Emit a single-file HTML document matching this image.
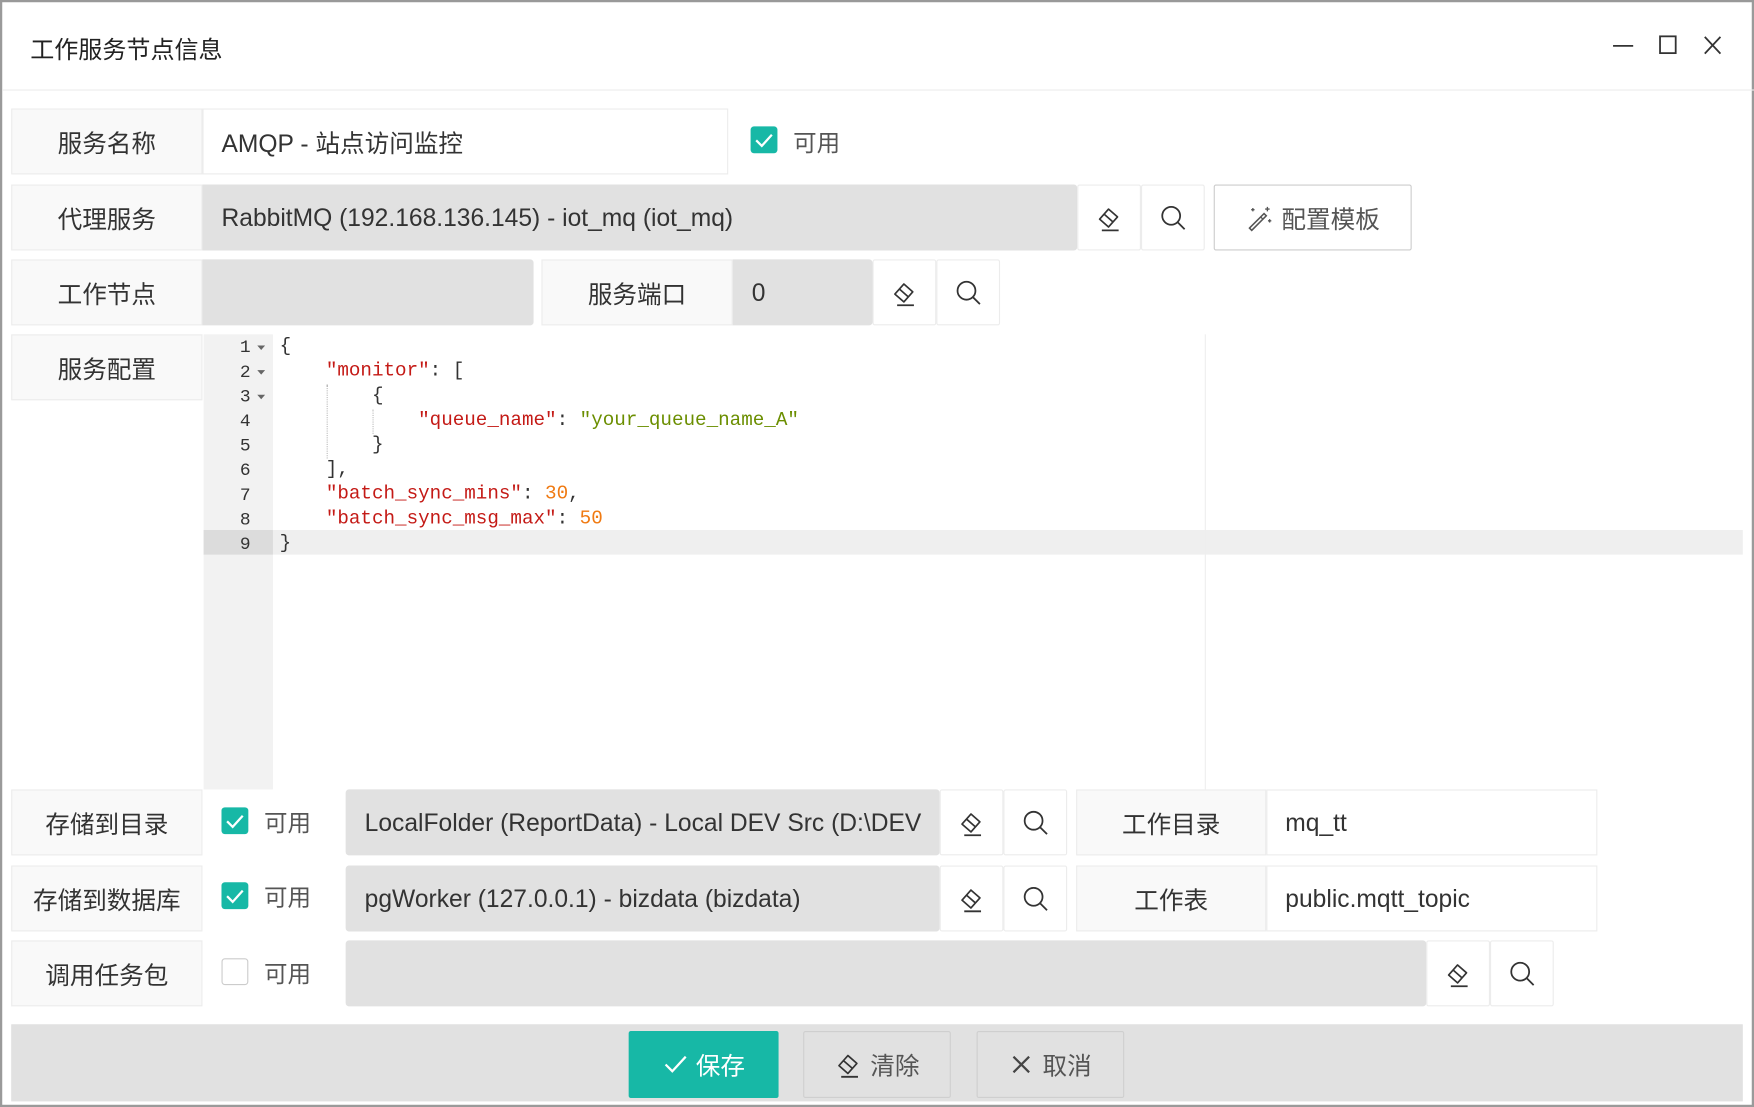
<!DOCTYPE html>
<html><head><meta charset="utf-8"><style>
*{box-sizing:border-box;margin:0;padding:0}
html,body{width:1754px;height:1107px;overflow:hidden;background:#fff}
#w{position:absolute;left:0;top:0;width:1568px;height:990px;transform:scale(1.118622,1.118182);transform-origin:0 0;font-family:"Liberation Sans","Noto Sans CJK SC",sans-serif;color:#333;border:2px solid #9a9a9a;border-top:2px solid #999;background:#fff}
.a{position:absolute}
.lab{position:absolute;background:#f9f9f9;border:1px solid #ececec;font-size:22px;color:#333;text-align:center;display:flex;align-items:center;justify-content:center}
.inp{position:absolute;border:1px solid #ececec;font-size:22px;color:#333;display:flex;align-items:center;padding-left:16px;white-space:nowrap;overflow:hidden}
.g{background:#e1e1e1;border-color:#e1e1e1;border-radius:0 3px 3px 0}
.btn{position:absolute;border:1px solid #ececec;background:#fff;display:flex;align-items:center;justify-content:center;border-radius:2px}
.cb{position:absolute;width:24px;height:24px;border-radius:3px;background:#17b8a6}
.cbu{background:#fff;border:1px solid #ccc}
.ky{font-size:21px;color:#555;position:absolute}
.code{position:absolute;font-family:"Liberation Mono",monospace;font-size:17.2px;line-height:22px;white-space:pre;color:#333}
.k{color:#c41a16}.s{color:#6b8e00}.n{color:#f07a12}
.gl{position:absolute;font-family:"Liberation Mono",monospace;font-size:16px;line-height:22px;color:#333;text-align:right;width:44px;left:182px}
</style></head><body><div id="w">
<div class="a" style="left:25px;top:26px;font-size:21.5px;color:#222">工作服务节点信息</div>
<svg class="a" style="left:1436px;top:26px" width="110" height="26"><path d="M4 13h18" stroke="#333" stroke-width="1.6"/><rect x="46" y="4.5" width="14" height="15" fill="none" stroke="#333" stroke-width="1.6"/><path d="M86 5l14 15M100 5l-14 15" stroke="#333" stroke-width="1.6"/></svg>
<div class="a" style="left:0;top:78px;width:1566px;height:1px;background:#ececec"></div>

<svg width="0" height="0" style="position:absolute"><defs>
<g id="er"><path d="M4 15l8-9 8 7-8 9z M8 10.5l8 7" fill="none" stroke="#333" stroke-width="1.5" stroke-linejoin="round"/><path d="M6 25h15" stroke="#333" stroke-width="1.6"/></g>
<g id="se"><circle cx="11" cy="11" r="8" fill="none" stroke="#333" stroke-width="1.6"/><path d="M17 17l6 6" stroke="#333" stroke-width="1.6"/></g>
<g id="ck"><path d="M5 12.5l5 5 9-10" fill="none" stroke="#fff" stroke-width="2"/></g>
</defs></svg>

<!-- row1 -->
<div class="lab" style="left:8px;top:95px;width:171px;height:59px">服务名称</div>
<div class="inp" style="left:179px;top:95px;width:470px;height:59px">AMQP - 站点访问监控</div>
<svg class="cb" style="left:669px;top:111px" viewBox="0 0 24 24"><use href="#ck"/></svg>
<div class="ky" style="left:707px;top:110px">可用</div>

<!-- row2 -->
<div class="lab" style="left:8px;top:163px;width:171px;height:59px">代理服务</div>
<div class="inp g" style="left:179px;top:163px;width:782px;height:59px">RabbitMQ (192.168.136.145) - iot_mq (iot_mq)</div>
<div class="btn" style="left:961px;top:163px;width:57px;height:59px"><svg width="26" height="28"><use href="#er"/></svg></div>
<div class="btn" style="left:1018px;top:163px;width:57px;height:59px"><svg width="26" height="26"><use href="#se"/></svg></div>
<div class="btn" style="left:1083px;top:163px;width:177px;height:59px;border-color:#ccc;font-size:22px;color:#555"><svg width="26" height="24" style="margin-right:6px"><path d="M4 21L17 8l2 2L6 23z" fill="none" stroke="#555" stroke-width="1.4"/><path d="M14 11l2 2M20 2v4M18 4h4M7 3v3M5.5 4.5h3M22 13v3M20.5 14.5h3" stroke="#555" stroke-width="1.2"/></svg>配置模板</div>

<!-- row3 -->
<div class="lab" style="left:8px;top:230px;width:171px;height:59px">工作节点</div>
<div class="inp g" style="left:179px;top:230px;width:296px;height:59px"></div>
<div class="lab" style="left:482px;top:230px;width:171px;height:59px">服务端口</div>
<div class="inp g" style="left:653px;top:230px;width:125px;height:59px">0</div>
<div class="btn" style="left:778px;top:230px;width:57px;height:59px"><svg width="26" height="28"><use href="#er"/></svg></div>
<div class="btn" style="left:835px;top:230px;width:57px;height:59px"><svg width="26" height="26"><use href="#se"/></svg></div>

<!-- row4 editor -->
<div class="lab" style="left:8px;top:297px;width:171px;height:59px">服务配置</div>
<div class="a" style="left:180px;top:297px;width:62px;height:407px;background:#f2f2f2"></div>
<div class="a" style="left:242px;top:472px;width:1314px;height:22px;background:#efefef"></div>
<div class="a" style="left:180px;top:472px;width:62px;height:22px;background:#dcdcdc"></div>
<div class="a" style="left:1075px;top:297px;width:1px;height:407px;background:#eee"></div>
<div class="gl" style="top:298px;left:178px">1<br>2<br>3<br>4<br>5<br>6<br>7<br>8<br>9</div>
<svg class="a" style="left:226px;top:298px" width="12" height="66"><path d="M2 9h7l-3.5 4z M2 31h7l-3.5 4z M2 53h7l-3.5 4z" fill="#666"/></svg>
<div class="a" style="left:290px;top:342px;height:66px;border-left:1px dotted #bbb"></div>
<div class="a" style="left:331px;top:364px;height:22px;border-left:1px dotted #bbb"></div>
<div class="code" style="left:248px;top:298px">{
    <span class="k">"monitor"</span>: [
        {
            <span class="k">"queue_name"</span>: <span class="s">"your_queue_name_A"</span>
        }
    ],
    <span class="k">"batch_sync_mins"</span>: <span class="n">30</span>,
    <span class="k">"batch_sync_msg_max"</span>: <span class="n">50</span>
}</div>

<!-- row5 -->
<div class="lab" style="left:8px;top:704px;width:171px;height:59px">存储到目录</div>
<svg class="cb" style="left:196px;top:720px" viewBox="0 0 24 24"><use href="#ck"/></svg>
<div class="ky" style="left:234px;top:718px">可用</div>
<div class="inp g" style="left:307px;top:704px;width:531px;height:59px;border-radius:3px">LocalFolder (ReportData) - Local DEV Src (D:\DEV</div>
<div class="btn" style="left:838px;top:704px;width:57px;height:59px"><svg width="26" height="28"><use href="#er"/></svg></div>
<div class="btn" style="left:895px;top:704px;width:57px;height:59px"><svg width="26" height="26"><use href="#se"/></svg></div>
<div class="lab" style="left:960px;top:704px;width:170px;height:59px">工作目录</div>
<div class="inp" style="left:1130px;top:704px;width:296px;height:59px">mq_tt</div>

<!-- row6 -->
<div class="lab" style="left:8px;top:772px;width:171px;height:59px">存储到数据库</div>
<svg class="cb" style="left:196px;top:787px" viewBox="0 0 24 24"><use href="#ck"/></svg>
<div class="ky" style="left:234px;top:785px">可用</div>
<div class="inp g" style="left:307px;top:772px;width:531px;height:59px;border-radius:3px">pgWorker (127.0.0.1) - bizdata (bizdata)</div>
<div class="btn" style="left:838px;top:772px;width:57px;height:59px"><svg width="26" height="28"><use href="#er"/></svg></div>
<div class="btn" style="left:895px;top:772px;width:57px;height:59px"><svg width="26" height="26"><use href="#se"/></svg></div>
<div class="lab" style="left:960px;top:772px;width:170px;height:59px">工作表</div>
<div class="inp" style="left:1130px;top:772px;width:296px;height:59px">public.mqtt_topic</div>

<!-- row7 -->
<div class="lab" style="left:8px;top:839px;width:171px;height:59px">调用任务包</div>
<div class="cb cbu" style="left:196px;top:855px"></div>
<div class="ky" style="left:234px;top:853px">可用</div>
<div class="inp g" style="left:307px;top:839px;width:966px;height:59px;border-radius:3px"></div>
<div class="btn" style="left:1273px;top:839px;width:57px;height:59px"><svg width="26" height="28"><use href="#er"/></svg></div>
<div class="btn" style="left:1330px;top:839px;width:57px;height:59px"><svg width="26" height="26"><use href="#se"/></svg></div>

<!-- footer -->
<div class="a" style="left:8px;top:914px;width:1548px;height:69px;background:#e1e1e1"></div>
<div class="btn" style="left:560px;top:920px;width:134px;height:60px;background:#17b8a6;border-color:#17b8a6;color:#fff;font-size:22px"><svg width="24" height="24" style="margin-right:6px"><path d="M3 12l6 6L21 5" fill="none" stroke="#fff" stroke-width="2"/></svg>保存</div>
<div class="btn" style="left:716px;top:920px;width:132px;height:60px;background:#e1e1e1;border-color:#cfcfcf;color:#555;font-size:22px"><svg width="26" height="28" style="margin-right:6px"><use href="#er"/></svg>清除</div>
<div class="btn" style="left:871px;top:920px;width:132px;height:60px;background:#e1e1e1;border-color:#cfcfcf;color:#555;font-size:22px"><svg width="22" height="22" style="margin-right:8px"><path d="M4 4l14 14M18 4L4 18" stroke="#444" stroke-width="2"/></svg>取消</div>
</div></body></html>
